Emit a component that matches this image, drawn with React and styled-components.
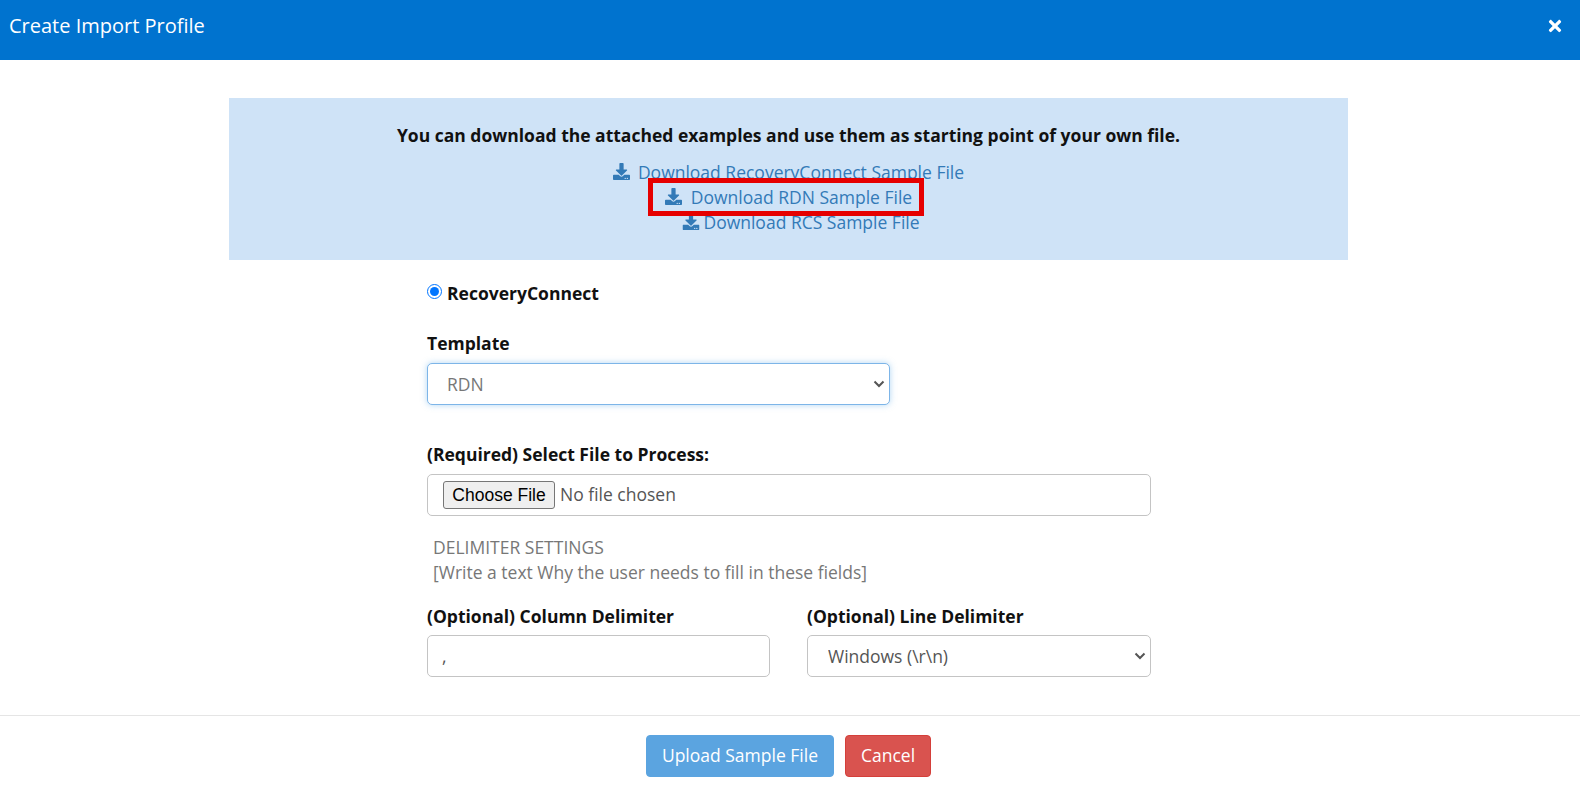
import styled, { createGlobalStyle } from "styled-components";
import { FaDownload, FaTimes } from "react-icons/fa";

const GlobalStyle = createGlobalStyle`
  html, body { margin: 0; padding: 0; background: #fff; }
  body { font-family: "Open Sans", sans-serif; font-size: 17.5px; line-height: 25px; color: #111; overflow: hidden; }
  * { box-sizing: border-box; }
`;

const Page = styled.div`
  width: 1580px;
  height: 791px;
  display: flex;
  flex-direction: column;
`;

const Header = styled.header`
  height: 60px;
  flex: none;
  background: #0073cf;
  color: #fff;
  display: flex;
  align-items: center;
  justify-content: space-between;
  padding: 0 16px 9px 9px;
  font-size: 20px;
`;

const Body = styled.main`
  flex: 1;
  padding: 38px 232px 0 229px;
`;

const Banner = styled.section`
  height: 162px;
  background: #cfe3f7;
  padding: 25px 0 0;
  display: flex;
  flex-direction: column;
  align-items: center;
`;

const Lead = styled.p`
  margin: 0 0 12px;
  font-weight: 700;
  color: #111;
`;

const SampleLink = styled.a`
  position: relative;
  display: flex;
  align-items: center;
  gap: ${(p) => p.$gap}px;
  height: 25px;
  color: #337ab7;
  text-decoration: none;
  transform: translateX(${(p) => p.$shift}px);

  ${(p) =>
    p.$marked &&
    `
    z-index: 1;
    &::after {
      content: "";
      position: absolute;
      inset: -7px -12px -6px -17px;
      border: 5px solid #e60000;
    }
  `}
`;

const LinkIcon = styled(FaDownload)`
  width: 17px;
  height: 17px;
  margin-top: -2px;
`;

const Form = styled.form`
  width: 724px;
  margin-left: 198px;
  padding-top: 21px;
`;

const RadioRow = styled.label`
  display: flex;
  align-items: center;
  gap: 5px;
  font-weight: 700;
  height: 25px;
  margin-bottom: 25px;
`;

const Radio = styled.input`
  width: 15px;
  height: 15px;
  margin: -4px 0 0 0;
  accent-color: #0075ff;
`;

const FieldLabel = styled.label`
  display: block;
  font-weight: 700;
  margin-bottom: ${(p) => (p.$tight ? 6 : 7)}px;
`;

const Select = styled.select`
  appearance: none;
  width: ${(p) => p.$width};
  height: 42px;
  padding: 0 24px 0 ${(p) => (p.$focused ? 19 : 20)}px;
  border: 1px solid ${(p) => (p.$focused ? "#7db5e8" : "#c4c4c4")};
  border-radius: 5px;
  background: #fff url("data:image/svg+xml,%3Csvg xmlns='http://www.w3.org/2000/svg' width='12' height='8' viewBox='0 0 12 8'%3E%3Cpath d='M1.5 1.5 6 6l4.5-4.5' fill='none' stroke='%23555' stroke-width='2'/%3E%3C/svg%3E") no-repeat right 4px center;
  color: ${(p) => (p.$focused ? "#777" : "#555")};
  font: 17.5px "Open Sans", sans-serif;
  box-shadow: ${(p) => (p.$focused ? "0 0 6px rgba(102,175,233,.5)" : "none")};
`;

const FileBox = styled.div`
  height: 42px;
  border: 1px solid #c4c4c4;
  border-radius: 5px;
  padding: 0 15px 1px;
  display: flex;
  align-items: center;
  color: #555;
`;

const ChooseButton = styled.button`
  width: 112px;
  height: 28px;
  margin: 1px 5px 0 0;
  padding: 0;
  border: 1px solid #767676;
  border-radius: 3px;
  background: #efefef;
  color: #000;
  font: 17.5px "Liberation Sans", Arial, sans-serif;
`;

const FileGroup = styled.div`
  margin-top: 37px;
`;

const Hint = styled.p`
  margin: 19px 0 19px 6px;
  color: #777;
`;

const Columns = styled.div`
  display: grid;
  grid-template-columns: 343px 344px;
  column-gap: 37px;
`;

const TextInput = styled.input`
  width: 100%;
  height: 42px;
  border: 1px solid #c4c4c4;
  border-radius: 5px;
  padding: 0 14px;
  color: #555;
  font: 17.5px "Open Sans", sans-serif;
`;

const Footer = styled.footer`
  flex: none;
  height: 76px;
  border-top: 1px solid #e5e5e5;
  padding: 19px 3px 0 0;
  display: flex;
  justify-content: center;
  gap: 11px;
`;

const Action = styled.button`
  height: 42px;
  padding: 0 15px 3px;
  border: 1px solid ${(p) => (p.$danger ? "#d43f3a" : "#5ba4e0")};
  border-radius: 4px;
  background: ${(p) => (p.$danger ? "#d9534f" : "#5ba4e0")};
  color: #fff;
  font: 17.5px "Open Sans", sans-serif;
`;

const App = () => {
  return (
    <Page>
      <GlobalStyle />
      <Header>
        <span>Create Import Profile</span>
        <FaTimes size={18} />
      </Header>
      <Body>
        <Banner>
          <Lead>You can download the attached examples and use them as starting point of your own file.</Lead>
          <SampleLink href="#" $gap={8} $shift={0}>
            <LinkIcon />
            Download RecoveryConnect Sample File
          </SampleLink>
          <SampleLink href="#" $gap={9} $shift={0} $marked>
            <LinkIcon />
            Download RDN Sample File
          </SampleLink>
          <SampleLink href="#" $gap={4} $shift={12.5}>
            <LinkIcon />
            Download RCS Sample File
          </SampleLink>
        </Banner>
        <Form>
          <RadioRow>
            <Radio type="radio" name="source" defaultChecked />
            RecoveryConnect
          </RadioRow>
          <FieldLabel>Template</FieldLabel>
          <Select $width="463px" $focused defaultValue="RDN">
            <option>RDN</option>
            <option>RCS</option>
          </Select>
          <FileGroup>
            <FieldLabel>(Required) Select File to Process:</FieldLabel>
            <FileBox>
              <ChooseButton type="button">Choose File</ChooseButton>
              No file chosen
            </FileBox>
          </FileGroup>
          <Hint>
            DELIMITER SETTINGS
            <br />
            [Write a text Why the user needs to fill in these fields]
          </Hint>
          <Columns>
            <div>
              <FieldLabel $tight>(Optional) Column Delimiter</FieldLabel>
              <TextInput defaultValue="," />
            </div>
            <div>
              <FieldLabel $tight>(Optional) Line Delimiter</FieldLabel>
              <Select $width="100%" defaultValue="win">
                <option value="win">Windows (\r\n)</option>
                <option value="unix">Unix (\n)</option>
              </Select>
            </div>
          </Columns>
        </Form>
      </Body>
      <Footer>
        <Action type="button">Upload Sample File</Action>
        <Action type="button" $danger>Cancel</Action>
      </Footer>
    </Page>
  );
};

export default App;
